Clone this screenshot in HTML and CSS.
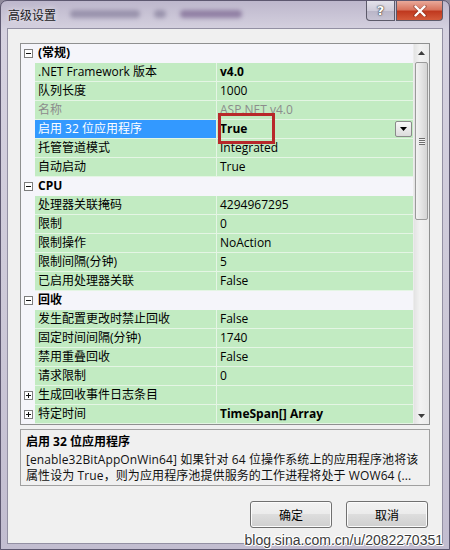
FILE: index.html
```html
<!DOCTYPE html>
<html lang="zh-CN">

<head>
    <meta charset="UTF-8">
    <meta name="viewport" content="width=device-width, initial-scale=1.0">
    <title>高级设置</title>
    <link rel="stylesheet" href="styles.css">
</head>

<body>
    <div class="window">
        <div class="titlebar">
            <span class="title">高级设置</span>
            <div class="ghost">
                <i class="blob b1"></i>
                <i class="blob b2"></i>
                <i class="blob b3"></i>
            </div>
            <div class="caption">
                <div class="cap-help">?</div>
                <div class="cap-close">
                    <svg width="14" height="12" viewBox="0 0 14 12">
                        <path d="M2 1.5 L12 10.5 M12 1.5 L2 10.5" stroke="#4a0f08" stroke-width="3.6" stroke-linecap="round" opacity=".35" />
                        <path d="M2.5 1.5 L11.5 10.5 M11.5 1.5 L2.5 10.5" stroke="#fff" stroke-width="2.4" stroke-linecap="round" />
                    </svg>
                </div>
            </div>
        </div>

        <div class="client">
            <div class="grid">
                <div class="rows">
                    <div class="row cat">
                        <span class="gut"><svg class="tog" width="9" height="9"><rect x=".5" y=".5" width="8" height="8" fill="#fff" stroke="#7d7d7d" /><path d="M2 4.5h5" stroke="#111" /></svg></span>
                        <span class="cat-name">(常规)</span>
                    </div>
                    <div class="row">
                        <span class="gut"></span>
                        <span class="name">.NET Framework 版本</span>
                        <span class="val bold">v4.0</span>
                    </div>
                    <div class="row">
                        <span class="gut"></span>
                        <span class="name">队列长度</span>
                        <span class="val">1000</span>
                    </div>
                    <div class="row dim">
                        <span class="gut"></span>
                        <span class="name">名称</span>
                        <span class="val">ASP.NET v4.0</span>
                    </div>
                    <div class="row selected">
                        <span class="gut"></span>
                        <span class="name">启用 32 位应用程序</span>
                        <span class="val bold">True
                            <span class="mark"></span>
                            <span class="drop"><svg width="7" height="4"><path d="M0 0h7L3.5 4z" fill="#000" /></svg></span>
                        </span>
                    </div>
                    <div class="row">
                        <span class="gut"></span>
                        <span class="name">托管管道模式</span>
                        <span class="val">Integrated</span>
                    </div>
                    <div class="row">
                        <span class="gut"></span>
                        <span class="name">自动启动</span>
                        <span class="val">True</span>
                    </div>
                    <div class="row cat">
                        <span class="gut"><svg class="tog" width="9" height="9"><rect x=".5" y=".5" width="8" height="8" fill="#fff" stroke="#7d7d7d" /><path d="M2 4.5h5" stroke="#111" /></svg></span>
                        <span class="cat-name">CPU</span>
                    </div>
                    <div class="row">
                        <span class="gut"></span>
                        <span class="name">处理器关联掩码</span>
                        <span class="val">4294967295</span>
                    </div>
                    <div class="row">
                        <span class="gut"></span>
                        <span class="name">限制</span>
                        <span class="val">0</span>
                    </div>
                    <div class="row">
                        <span class="gut"></span>
                        <span class="name">限制操作</span>
                        <span class="val">NoAction</span>
                    </div>
                    <div class="row">
                        <span class="gut"></span>
                        <span class="name">限制间隔(分钟)</span>
                        <span class="val">5</span>
                    </div>
                    <div class="row">
                        <span class="gut"></span>
                        <span class="name">已启用处理器关联</span>
                        <span class="val">False</span>
                    </div>
                    <div class="row cat">
                        <span class="gut"><svg class="tog" width="9" height="9"><rect x=".5" y=".5" width="8" height="8" fill="#fff" stroke="#7d7d7d" /><path d="M2 4.5h5" stroke="#111" /></svg></span>
                        <span class="cat-name">回收</span>
                    </div>
                    <div class="row">
                        <span class="gut"></span>
                        <span class="name">发生配置更改时禁止回收</span>
                        <span class="val">False</span>
                    </div>
                    <div class="row">
                        <span class="gut"></span>
                        <span class="name">固定时间间隔(分钟)</span>
                        <span class="val">1740</span>
                    </div>
                    <div class="row">
                        <span class="gut"></span>
                        <span class="name">禁用重叠回收</span>
                        <span class="val">False</span>
                    </div>
                    <div class="row">
                        <span class="gut"></span>
                        <span class="name">请求限制</span>
                        <span class="val">0</span>
                    </div>
                    <div class="row">
                        <span class="gut"><svg class="tog" width="9" height="9"><rect x=".5" y=".5" width="8" height="8" fill="#fff" stroke="#7d7d7d" /><path d="M2 4.5h5M4.5 2v5" stroke="#111" /></svg></span>
                        <span class="name">生成回收事件日志条目</span>
                        <span class="val"></span>
                    </div>
                    <div class="row">
                        <span class="gut"><svg class="tog" width="9" height="9"><rect x=".5" y=".5" width="8" height="8" fill="#fff" stroke="#7d7d7d" /><path d="M2 4.5h5M4.5 2v5" stroke="#111" /></svg></span>
                        <span class="name">特定时间</span>
                        <span class="val bold">TimeSpan[] Array</span>
                    </div>
                </div>

                <div class="scroll">
                    <div class="arrow"><svg width="7" height="4"><path d="M3.5 0L7 4H0z" fill="#3c3c3c" /></svg></div>
                    <div class="thumb">
                        <span class="grip"></span>
                    </div>
                    <div class="track"></div>
                    <div class="arrow"><svg width="7" height="4"><path d="M0 0h7L3.5 4z" fill="#3c3c3c" /></svg></div>
                </div>
            </div>

            <div class="desc">
                <div class="desc-title">启用 32 位应用程序</div>
                <div class="desc-line">[enable32BitAppOnWin64] 如果针对 64 位操作系统上的应用程序池将该</div>
                <div class="desc-line">属性设为 True，则为应用程序池提供服务的工作进程将处于 WOW64 (...</div>
            </div>

            <div class="buttons">
                <button>确定</button>
                <button>取消</button>
            </div>
        </div>

        <span class="watermark">blog.sina.com.cn/u/2082270351</span>
    </div>
</body>

</html>
```

FILE: styles.css
```css
* {
    margin: 0;
    padding: 0;
    box-sizing: border-box;
}

html,
body {
    width: 450px;
    height: 550px;
    overflow: hidden;
    background: #8f8a9c;
}

body {
    font-family: "Open Sans", "Noto Sans CJK SC", sans-serif;
    font-size: 12px;
    color: #000;
}

.window {
    position: relative;
    width: 450px;
    height: 550px;
    border-radius: 7px 7px 0 0;
    border: 1px solid #5d5870;
    background: linear-gradient(180deg, #bdb7cc 0, #d6d2e0 30px, #cdc9d8 300px, #c2bdd0 100%);
    display: flex;
    flex-direction: column;
}

/* title bar */

.titlebar {
    height: 27px;
    display: flex;
    align-items: flex-start;
    position: relative;
}

.title {
    font-family: "Noto Sans CJK SC", sans-serif;
    font-size: 12px;
    line-height: 18px;
    padding: 5px 0 0 7px;
    color: #1a1a22;
    text-shadow: 0 0 6px rgba(255, 255, 255, 0.9);
}

.ghost {
    display: flex;
    align-items: center;
    gap: 14px;
    margin: 9px 0 0 14px;
    filter: blur(2px);
    opacity: 0.5;
}

.blob {
    display: block;
    height: 8px;
    border-radius: 4px;
    background: #6c6485;
}

.b1 {
    width: 70px;
}

.b2 {
    width: 12px;
}

.b3 {
    width: 62px;
    background: #5b3f74;
}

.caption {
    margin-left: auto;
    margin-right: 6px;
    display: flex;
    gap: 1px;
}

.cap-help,
.cap-close {
    height: 20px;
    border: 1px solid #5c5a6a;
    border-top: none;
    display: flex;
    align-items: center;
    justify-content: center;
}

.cap-help {
    width: 29px;
    border-radius: 0 0 0 4px;
    background: linear-gradient(180deg, #e3e1ea 0, #cfccda 50%, #b9b5c7 51%, #c7c3d3 100%);
    color: #fff;
    font-family: "DejaVu Sans", sans-serif;
    font-weight: bold;
    font-size: 13px;
    text-shadow: 0 0 2px #333, 0 0 1px #000;
}

.cap-close {
    width: 47px;
    border-radius: 0 0 4px 0;
    background: linear-gradient(180deg, #e9a99a 0, #d8755f 45%, #c0391f 55%, #d45a3a 100%);
}

/* client area */

.client {
    position: relative;
    height: 516px;
    margin: 0 6px;
    border: 1px solid #9390a3;
    background: #f0f0f0;
    padding: 14px 12px 0 12px;
}

.grid {
    display: flex;
    height: 382px;
    border: 1px solid #8f9090;
    background: #f5f5fa;
}

.rows {
    flex: 1;
    display: flex;
    flex-direction: column;
}

.row {
    display: flex;
    height: 19px;
    line-height: 18px;
}

.gut {
    width: 14px;
    display: flex;
    align-items: center;
    padding-left: 3px;
    background: #f5f5fa;
}

.tog {
    display: block;
}

.name {
    width: 182px;
    padding-left: 3px;
    white-space: nowrap;
    overflow: hidden;
    background: #c2ebc2;
    border-right: 1px solid #e4f5e4;
    border-bottom: 1px solid #e4f5e4;
}

.val {
    position: relative;
    flex: 1;
    padding-left: 3px;
    white-space: nowrap;
    background: #c2ebc2;
    border-bottom: 1px solid #e4f5e4;
}

.bold {
    font-weight: bold;
}

.cat {
    background: #f5f5fa;
}

.cat-name {
    padding-left: 3px;
    font-weight: bold;
}

.dim .name,
.dim .val {
    color: #8c8c8c;
}

.selected .name {
    background: #3399ff;
    color: #fff;
}

.mark {
    position: absolute;
    z-index: 5;
    left: 1px;
    top: -7px;
    width: 57px;
    height: 31px;
    border: 3px solid #b8282a;
}

.drop {
    position: absolute;
    right: 1px;
    top: 1px;
    width: 17px;
    height: 16px;
    border: 1px solid #8a8a8a;
    border-radius: 2px;
    background: linear-gradient(180deg, #f8f8f8, #dcdcdc);
    display: flex;
    align-items: center;
    justify-content: center;
}

/* scrollbar */

.scroll {
    width: 16px;
    display: flex;
    flex-direction: column;
    background: linear-gradient(90deg, #e3e3e3, #f2f2f2 40%, #eaeaea);
    border-left: 1px solid #ececec;
}

.arrow {
    height: 17px;
    display: flex;
    align-items: center;
    justify-content: center;
}

.thumb {
    height: 158px;
    margin: 1px 1px 0 1px;
    border: 1px solid #9a9a9a;
    border-radius: 2px;
    background: linear-gradient(90deg, #f3f3f3, #e4e4e4 50%, #d4d4d4);
    display: flex;
    align-items: center;
    justify-content: center;
}

.grip {
    width: 6px;
    height: 7px;
    background: repeating-linear-gradient(180deg, #6e6e6e 0, #6e6e6e 1px, #f3f3f3 1px, #f3f3f3 2px);
}

.track {
    flex: 1;
}

/* description */

.desc {
    height: 57px;
    margin-top: 4px;
    border: 1px solid #a0a0a0;
    padding: 2px 0 0 5px;
    overflow: hidden;
}

.desc-title {
    font-weight: bold;
    line-height: 19px;
    margin-bottom: 1px;
}

.desc-line {
    line-height: 16px;
    white-space: nowrap;
    letter-spacing: 0.1px;
    color: #111;
}

/* buttons */

.buttons {
    display: flex;
    justify-content: flex-end;
    gap: 14px;
    margin-top: 15px;
    padding-right: 2px;
}

button {
    width: 82px;
    height: 27px;
    border: 1px solid #707070;
    border-radius: 3px;
    background: linear-gradient(180deg, #f2f2f2 0, #ebebeb 49%, #dddddd 50%, #cfcfcf 100%);
    box-shadow: inset 0 0 0 1px #fbfbfb;
    font-family: "Noto Sans CJK SC", sans-serif;
    font-size: 12px;
    color: #000;
}

.watermark {
    position: absolute;
    right: 6px;
    bottom: 1px;
    font-family: "Liberation Sans", sans-serif;
    font-size: 14px;
    line-height: 16px;
    color: #3b3b3b;
    text-shadow: 1px 0 0 #fff, -1px 0 0 #fff, 0 1px 0 #fff, 0 -1px 0 #fff, 1px 1px 0 #fff, -1px -1px 0 #fff;
}
```
